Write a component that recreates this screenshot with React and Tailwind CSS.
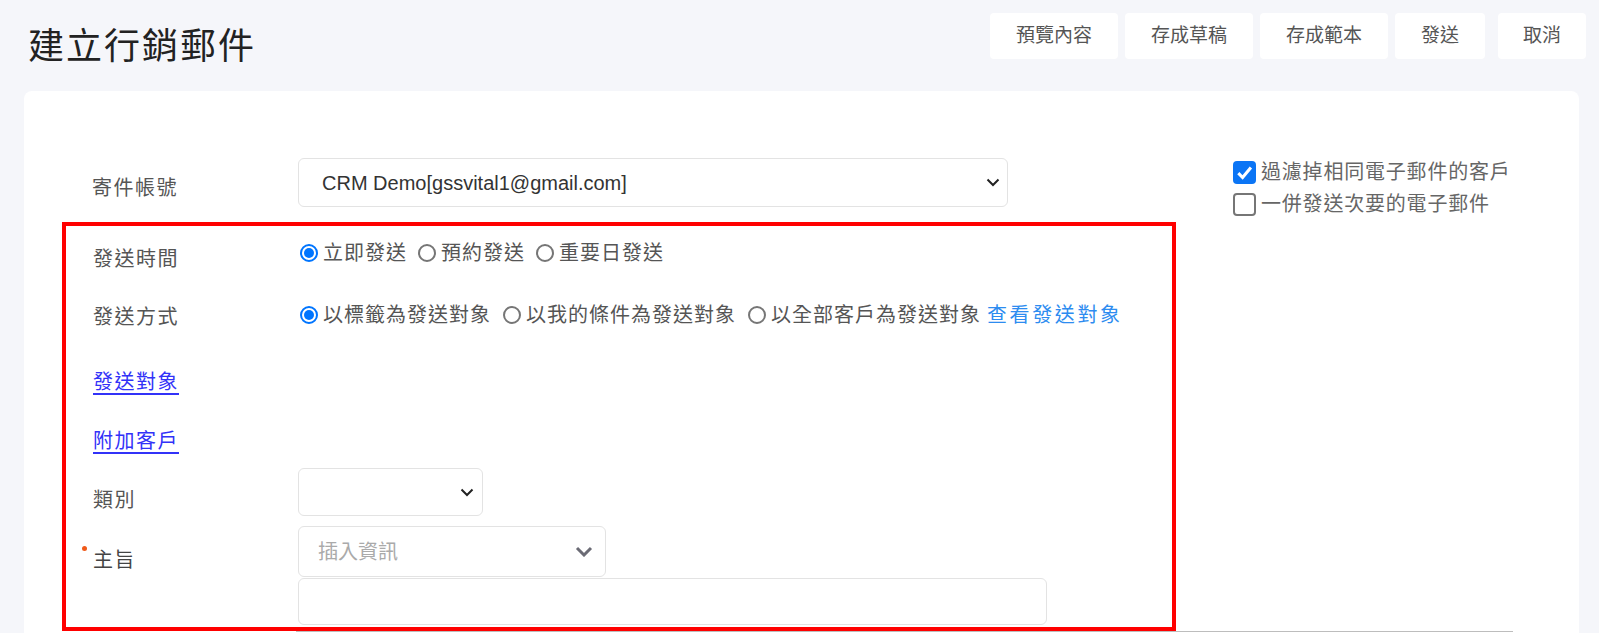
const FONT = { fontFamily: '"Liberation Sans", "Noto Sans CJK TC", sans-serif' };

function Chevron({ className = '' }) {
  return (
    <svg width="14" height="9" viewBox="0 0 14 9" className={className}>
      <path d="M1.5 1.5 L7 7 L12.5 1.5" fill="none" stroke="#222" strokeWidth="2" />
    </svg>
  );
}

function Radio({ checked, label }) {
  return (
    <div className="flex items-center">
      <span
        className={
          checked
            ? 'ml-[2px] w-[18px] h-[18px] rounded-full border-2 border-[#0075ff] flex items-center justify-center'
            : 'ml-[2px] w-[18px] h-[18px] rounded-full border-2 border-[#767676]'
        }
      >
        {checked && <span className="w-[10px] h-[10px] rounded-full bg-[#0075ff]" />}
      </span>
      <span className="ml-[5px] tracking-[1px]">{label}</span>
    </div>
  );
}

function Checkbox({ checked, label }) {
  return (
    <div className="flex items-center h-[32px] gap-[5px]">
      {checked ? (
        <span className="w-[23px] h-[23px] rounded-[4px] bg-[#0b75f5] flex items-center justify-center">
          <svg width="19" height="19" viewBox="0 0 16 16">
            <path d="M2.8 8.6 L6.4 12.2 L13.4 3.8" fill="none" stroke="#fff" strokeWidth="2.6" />
          </svg>
        </span>
      ) : (
        <span className="w-[23px] h-[23px] rounded-[4px] border-2 border-[#767676] bg-white" />
      )}
      <span className="text-[20px] text-[#666] tracking-[0.8px]">{label}</span>
    </div>
  );
}

const buttons = ['預覽內容', '存成草稿', '存成範本', '發送'];

export default function App() {
  return (
    <div className="h-screen overflow-hidden bg-[#f5f6fa]" style={FONT}>
      {/* header */}
      <div className="h-[91px] flex justify-between items-start pl-[28px] pr-[13px]">
        <h1 className="mt-[25px] leading-[44px] text-[36px] font-normal tracking-[2px] text-[#222]">
          建立行銷郵件
        </h1>
        <div className="mt-[13px] flex">
          {buttons.map((b) => (
            <button
              key={b}
              className="h-[46px] px-[26px] mr-[7px] bg-white rounded-[4px] text-[19px] text-[#555]"
            >
              {b}
            </button>
          ))}
          <button className="h-[46px] px-[25px] ml-[6px] bg-white rounded-[4px] text-[19px] text-[#555]">
            取消
          </button>
        </div>
      </div>

      {/* card */}
      <div className="ml-[24px] mr-[20px] bg-white rounded-[8px] min-h-[600px]">
        <div className="flex items-start">
          <div className="pl-[38px] pt-[67px]">
            <div className="flex items-center h-[49px]">
              <div className="w-[236px] pl-[30px] pt-[10px] text-[20px] text-[#555] tracking-[1.5px]">
                寄件帳號
              </div>
              <div className="w-[710px] h-[49px] rounded-[6px] border border-[#e3e3e3] flex items-center justify-between pl-[23px] pr-[7px]">
                <span className="text-[20px] text-[#333]">CRM Demo[gssvital1@gmail.com]</span>
                <Chevron />
              </div>
            </div>

            <div className="mt-[15px] w-[1114px] border-4 border-[#ff0000] pl-[27px] pb-[2px] text-[20px] text-[#555]">
              <div className="flex items-center h-[60px]">
                <div className="w-[205px] pt-[6px] tracking-[1.5px]">發送時間</div>
                <div className="flex items-center gap-[9px] pb-[6px] text-[#555]">
                  <Radio checked label="立即發送" />
                  <Radio label="預約發送" />
                  <Radio label="重要日發送" />
                </div>
              </div>

              <div className="flex items-center h-[60px]">
                <div className="w-[205px] pt-[2px] tracking-[1.5px]">發送方式</div>
                <div className="flex items-center gap-[10px] pb-[2px]">
                  <Radio checked label="以標籤為發送對象" />
                  <Radio label="以我的條件為發送對象" />
                  <Radio label="以全部客戶為發送對象" />
                  <span className="-ml-[4px] text-[#2d8cf0] tracking-[2.6px]">查看發送對象</span>
                </div>
              </div>

              <div className="flex items-center h-[72px]">
                <a className="text-[#3232f8] underline decoration-[1.5px] underline-offset-[4px] tracking-[1.5px] leading-[28px]">
                  發送對象
                </a>
              </div>

              <div className="flex items-center h-[46px]">
                <a className="text-[#3232f8] underline decoration-[1.5px] underline-offset-[4px] tracking-[1.5px] leading-[28px]">
                  附加客戶
                </a>
              </div>

              <div className="flex items-start">
                <div className="w-[205px] mt-[22px] leading-[28px] tracking-[1.5px]">類別</div>
                <div className="mt-[4px] w-[185px] h-[48px] rounded-[6px] border border-[#e3e3e3] flex items-center justify-end pr-[8px]">
                  <Chevron />
                </div>
              </div>

              <div className="flex items-start">
                <div className="relative w-[205px] mt-[30px] leading-[28px] tracking-[1.5px] text-[#444]">
                  <span className="absolute left-[-11px] top-0 w-[5px] h-[5px] rounded-full bg-[#f05a1a]" />
                  主旨
                </div>
                <div className="mt-[10px] w-[308px] h-[51px] rounded-[6px] border border-[#e3e3e3] flex items-center justify-between pl-[19px] pr-[12px]">
                  <span className="text-[#aaa]">插入資訊</span>
                  <svg width="18" height="11" viewBox="0 0 18 11">
                    <path d="M2 2 L9 9 L16 2" fill="none" stroke="#6b6b75" strokeWidth="3" />
                  </svg>
                </div>
              </div>

              <div className="ml-[205px] mt-[1px] w-[749px] h-[47px] rounded-[6px] border border-[#e3e3e3]" />
            </div>
          </div>

          <div className="ml-[57px] pt-[65px]">
            <Checkbox checked label="過濾掉相同電子郵件的客戶" />
            <Checkbox label="一併發送次要的電子郵件" />
          </div>
        </div>
        <div className="ml-[272px] w-[1217px] border-t border-[#bdbdbd]" />
      </div>
    </div>
  );
}
